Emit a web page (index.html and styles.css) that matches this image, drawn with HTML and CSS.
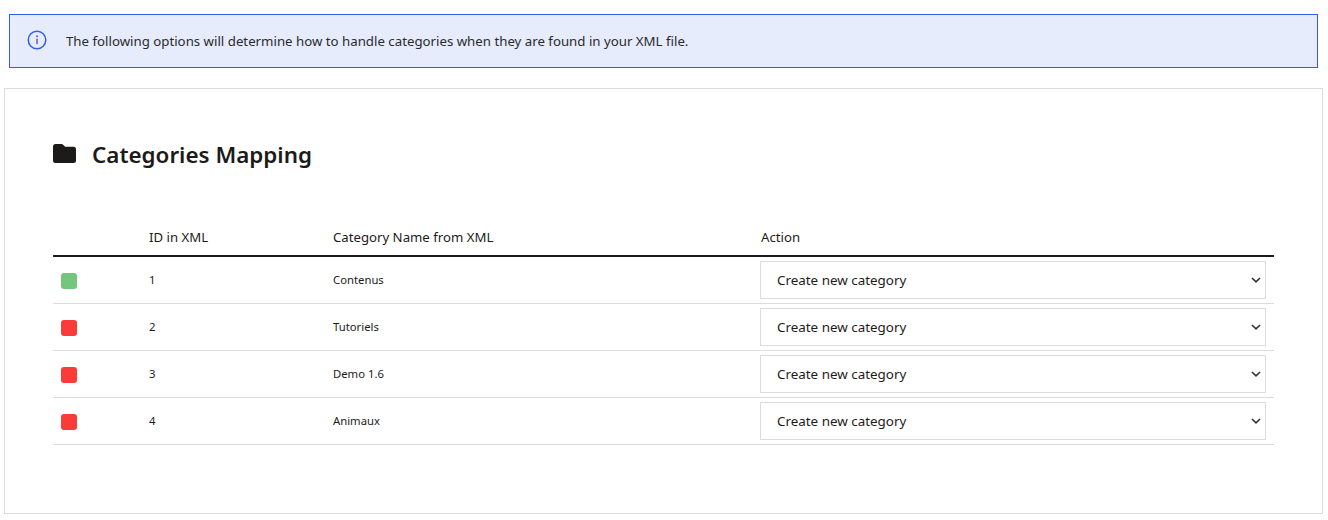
FILE: index.html
```html
<!DOCTYPE html>
<html lang="en">
<head>
<meta charset="utf-8">
<title>Categories Mapping</title>
<link rel="stylesheet" href="styles.css">
</head>
<body>
<div class="alert">
  <svg class="alert-icon" width="20" height="20" viewBox="0 0 20 20" aria-hidden="true">
    <circle cx="10" cy="10" r="8.75" fill="none" stroke="#2f5fe8" stroke-width="1.5"/>
    <rect x="9.3" y="8.6" width="1.4" height="5.6" fill="#5a4fd0"/>
    <circle cx="10" cy="6.3" r="0.95" fill="#5a4fd0"/>
  </svg>
  <p class="alert-text">The following options will determine how to handle categories when they are found in your XML file.</p>
</div>
<section class="card">
  <h2 class="title">
    <svg class="title-icon" width="23" height="19" viewBox="0 0 23 19" aria-hidden="true">
      <path d="M2.500 0h6c.6 0 1.100.2 1.600.7L12.200 2.800H20.500A2.500 2.500 0 0 1 23 5.300V16.500A2.500 2.500 0 0 1 20.500 19H2.500A2.500 2.500 0 0 1 0 16.500V2.500A2.500 2.500 0 0 1 2.500 0Z" fill="#1d1b19"/>
    </svg>
    Categories Mapping
  </h2>
  <table class="map">
    <thead>
      <tr>
        <th class="col-status"></th>
        <th class="col-id">ID in XML</th>
        <th class="col-name">Category Name from XML</th>
        <th class="col-action">Action</th>
      </tr>
    </thead>
    <tbody>
      <tr>
        <td class="cell-status"><span class="dot dot-ok"></span></td>
        <td>1</td>
        <td>Contenus</td>
        <td><select class="action"><option>Create new category</option></select></td>
      </tr>
      <tr>
        <td class="cell-status"><span class="dot dot-bad"></span></td>
        <td>2</td>
        <td>Tutoriels</td>
        <td><select class="action"><option>Create new category</option></select></td>
      </tr>
      <tr>
        <td class="cell-status"><span class="dot dot-bad"></span></td>
        <td>3</td>
        <td>Demo 1.6</td>
        <td><select class="action"><option>Create new category</option></select></td>
      </tr>
      <tr>
        <td class="cell-status"><span class="dot dot-bad"></span></td>
        <td>4</td>
        <td>Animaux</td>
        <td><select class="action"><option>Create new category</option></select></td>
      </tr>
    </tbody>
  </table>
</section>
</body>
</html>
```
FILE: styles.css
```css
* { box-sizing: border-box; }
html, body { background: #fff; }
body {
  margin: 0;
  padding: 14px 5px 0 4px;
  font-family: "Noto Sans", "Open Sans", sans-serif;
  color: #1d1b19;
}
.alert {
  display: flex;
  align-items: center;
  gap: 19px;
  height: 54px;
  margin: 0 5px 20px 5px;
  padding: 0 17px 0 17px;
  background: #e6ecfb;
  border: 1px solid #2f5fe8;
}
.alert-icon { flex: none; margin-top: -2px; }
.alert-text { margin: 0; font-size: 13.25px; line-height: 20px; color: #2a2a2e; }
.card {
  height: 426px;
  padding: 47px 48px 0;
  background: #fff;
  border: 1px solid #dcdcdc;
}
.title {
  display: flex;
  align-items: center;
  gap: 16px;
  height: 36px;
  margin: 0 0 48px;
  font-size: 22.4px;
  font-weight: 600;
  color: #1d1b19;
}
.title-icon { flex: none; margin-top: -2px; }
.map {
  width: 1221px;
  border-collapse: collapse;
  table-layout: fixed;
}
.map th {
  height: 36px;
  padding: 0 8px 2px;
  text-align: left;
  font-size: 13.2px;
  font-weight: 400;
  border-bottom: 2px solid #1d1b19;
}
.col-status { width: 88px; }
.col-id { width: 184px; }
.col-name { width: 427px; }
.map .col-action { padding-left: 9px; }
.map td {
  height: 47px;
  padding: 0 8px;
  font-size: 11.3px;
  border-bottom: 1px solid #dcdcdc;
  vertical-align: middle;
}
.map .cell-status { padding-top: 2px; }
.dot { display: block; width: 16px; height: 16px; border-radius: 3px; }
.dot-ok { background: #73c67c; }
.dot-bad { background: #fb3a3a; }
.action {
  display: block;
  width: 100%;
  height: 38px;
  padding: 0 24px 0 16px;
  appearance: none;
  background: #fff url("data:image/svg+xml,%3Csvg xmlns='http://www.w3.org/2000/svg' width='10' height='6' viewBox='0 0 10 6'%3E%3Cpath d='M1 1l4 3.800 4-3.800' fill='none' stroke='%23333' stroke-width='1.600'/%3E%3C/svg%3E") no-repeat right 4px center;
  border: 1px solid #dcdcdc;
  border-radius: 0;
  font: inherit;
  font-size: 13.4px;
  color: #1d1b19;
}
```
